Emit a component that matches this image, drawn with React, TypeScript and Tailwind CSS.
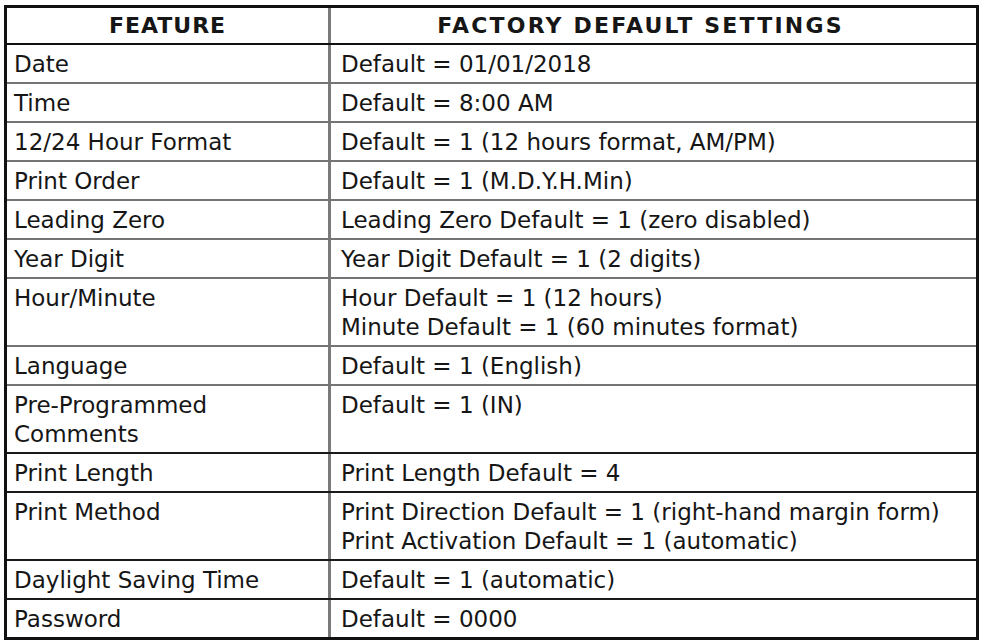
import React from 'react';

type Row = {
  feature: string[];
  value: string[];
  line: 'gray' | 'dark' | 'none';
};

const rows: Row[] = [
  { feature: ['Date'], value: ['Default = 01/01/2018'], line: 'gray' },
  { feature: ['Time'], value: ['Default = 8:00 AM'], line: 'gray' },
  { feature: ['12/24 Hour Format'], value: ['Default = 1 (12 hours format, AM/PM)'], line: 'gray' },
  { feature: ['Print Order'], value: ['Default = 1 (M.D.Y.H.Min)'], line: 'gray' },
  { feature: ['Leading Zero'], value: ['Leading Zero Default = 1 (zero disabled)'], line: 'gray' },
  { feature: ['Year Digit'], value: ['Year Digit Default = 1 (2 digits)'], line: 'gray' },
  {
    feature: ['Hour/Minute'],
    value: ['Hour Default = 1 (12 hours)', 'Minute Default = 1 (60 minutes format)'],
    line: 'gray',
  },
  { feature: ['Language'], value: ['Default = 1 (English)'], line: 'gray' },
  { feature: ['Pre-Programmed', 'Comments'], value: ['Default = 1 (IN)'], line: 'dark' },
  { feature: ['Print Length'], value: ['Print Length Default = 4'], line: 'dark' },
  {
    feature: ['Print Method'],
    value: ['Print Direction Default = 1 (right-hand margin form)', 'Print Activation Default = 1 (automatic)'],
    line: 'dark',
  },
  { feature: ['Daylight Saving Time'], value: ['Default = 1 (automatic)'], line: 'dark' },
  { feature: ['Password'], value: ['Default = 0000'], line: 'none' },
];

function Lines({ items }: { items: string[] }) {
  return (
    <>
      {items.map((t) => (
        <div key={t} className="whitespace-nowrap">
          {t}
        </div>
      ))}
    </>
  );
}

export default function App() {
  return (
    <div className="min-h-screen bg-white pl-[4px] pt-[5px] font-['DejaVu_Sans',sans-serif] text-[#161616]">
      <div className="w-[975px] border-[3px] border-[#111]">
        {/* header */}
        <div className="grid grid-cols-[324px_1fr] border-b-2 border-[#111] text-[22px] font-bold">
          <div className="flex h-[35px] items-center justify-center border-r-[3px] border-[#7a7a7a] tracking-[1px]">
            FEATURE
          </div>
          <div className="flex h-[35px] items-center justify-center pr-[26px] tracking-[2.2px]">
            FACTORY DEFAULT SETTINGS
          </div>
        </div>

        {rows.map((r, i) => (
          <div
            key={i}
            className={
              'grid grid-cols-[324px_1fr] text-[23px] leading-[29px] ' +
              (r.line === 'gray'
                ? 'border-b-2 border-[#747474]'
                : r.line === 'dark'
                ? 'border-b-2 border-[#1a1a1a]'
                : '')
            }
          >
            <div className="border-r-[3px] border-[#7a7a7a] pb-[3px] pl-[7px] pt-[5px]">
              <Lines items={r.feature} />
            </div>
            <div className="pb-[3px] pl-[10px] pt-[5px]">
              <Lines items={r.value} />
            </div>
          </div>
        ))}
      </div>
    </div>
  );
}
